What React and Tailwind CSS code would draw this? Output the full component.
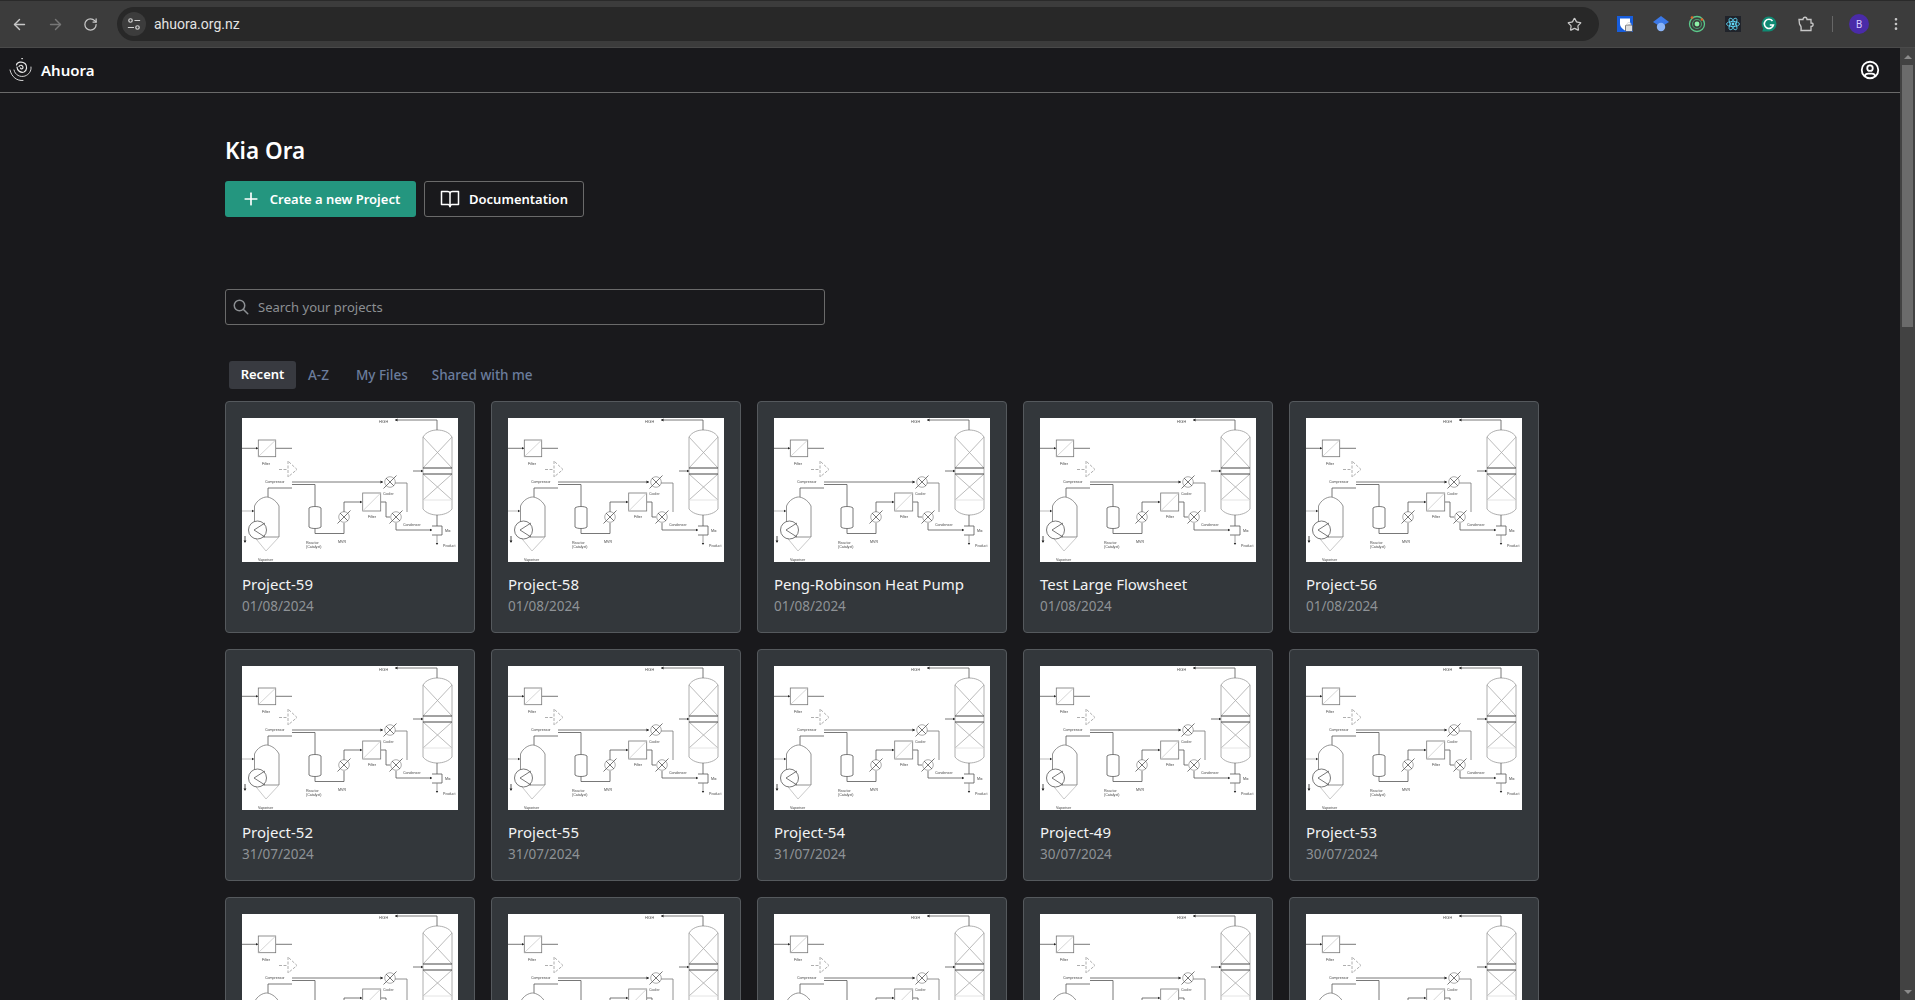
import React from 'react';
import { ArrowLeft, ArrowRight, RotateCw, Star, MoreVertical } from 'lucide-react';
import { TbPlus, TbSearch, TbUserCircle } from 'react-icons/tb';

const projects = [
    { name: 'Project-59', date: '01/08/2024' },
    { name: 'Project-58', date: '01/08/2024' },
    { name: 'Peng-Robinson Heat Pump', date: '01/08/2024' },
    { name: 'Test Large Flowsheet', date: '01/08/2024' },
    { name: 'Project-56', date: '01/08/2024' },
    { name: 'Project-52', date: '31/07/2024' },
    { name: 'Project-55', date: '31/07/2024' },
    { name: 'Project-54', date: '31/07/2024' },
    { name: 'Project-49', date: '30/07/2024' },
    { name: 'Project-53', date: '30/07/2024' },
    { name: 'Project-48', date: '30/07/2024' },
    { name: 'Project-47', date: '30/07/2024' },
    { name: 'Project-46', date: '30/07/2024' },
    { name: 'Project-45', date: '30/07/2024' },
    { name: 'Project-44', date: '30/07/2024' },
];

const labels = [
    { x: 20, y: 46.5, t: 'Filter' },
    { x: 23, y: 64.5, t: 'Compressor' },
    { x: 16, y: 142.5, t: 'Vaporiser' },
    { x: 64, y: 125.5, t: 'Reactor' },
    { x: 64, y: 129.8, t: '(Catalyst)' },
    { x: 96, y: 125, t: 'MVR' },
    { x: 126, y: 100, t: 'Filter' },
    { x: 141, y: 77, t: 'Cooler' },
    { x: 161, y: 107.5, t: 'Condenser' },
    { x: 203, y: 113.5, t: 'Mix' },
    { x: 201, y: 129, t: 'Product' },
    { x: 137, y: 5, t: 'HIGH' },
];

// the same flowsheet drawing is used as the thumbnail of every project
function Flowsheet() {
    return (
        <svg viewBox="0 0 216 144" className="block w-[216px] h-[144px] bg-white blur-[0.2px]">
            <g fill="none" stroke="#555" strokeWidth="0.8">
                <path d="M0 30.3H16M34 30.3H50" />
                <rect x="16.3" y="22" width="17.4" height="16.7" stroke="#777" />
                <path d="M16.3 38.7L33.7 22" stroke="#ccc" />
                <path d="M46 43V59L55 51.5ZM37 51.5H46" stroke="#999" strokeDasharray="3 1.5" />
                <path d="M50 64H141" />
                <path d="M50 66.5H73V88" />
                <path d="M50 70H26V79" />
                <path d="M12.5 88C15 82 21 79 24.5 79C28 79 34 82 37 88V119H12.5Z" stroke="#777" />
                <path d="M12.5 119L24 133L37 119" stroke="#bbb" />
                <circle cx="15.5" cy="112" r="9" fill="#fff" />
                <path d="M23 105L12 112L23 119" />
                <path d="M0 93H12" stroke="#aaa" />
                <path d="M3 118V124" stroke="#222" />
                <path d="M67 90C69 88 77 88 79 90V109C77 111 69 111 67 109Z" />
                <path d="M73 111V115.5H102V105" />
                <circle cx="102" cy="99" r="5.3" stroke="#999" />
                <path d="M95.5 105.5L108.5 92.5M98 95L106 103" />
                <path d="M102 94V84H120" />
                <rect x="120.7" y="75" width="18" height="18" stroke="#777" />
                <path d="M120.7 93L138.7 75" stroke="#ccc" />
                <path d="M139 84H144V99H148" />
                <circle cx="154" cy="99" r="5.3" stroke="#999" />
                <path d="M147.5 105.5L160.5 92.5M150 95L158 103" />
                <path d="M154 105V112H190" />
                <path d="M190 108H200V117H190" />
                <path d="M195 117V126" stroke="#888" />
                <circle cx="148" cy="64" r="5.3" stroke="#999" />
                <path d="M141.5 70.5L154.5 57.5M144 60L152 68" />
                <path d="M153 65H165V94" stroke="#777" />
                <path d="M181 19C184 14 190 12 195 12C201 12 207 14 210 19V91C207 95 201 97 195 97C190 97 184 95 181 91Z" stroke="#999" />
                <path d="M181 19L210 50M210 19L181 50M181 56L210 82M210 56L181 82" stroke="#aaa" />
                <path d="M181 50H210M181 56H210" strokeWidth="1" stroke="#444" />
                <path d="M181 82H210" stroke="#ddd" />
                <path d="M171 53H181" />
                <path d="M195 12V2H153" />
                <path d="M195 97V108" />
            </g>
            <g fill="#222">
                <path d="M16 30.3l-2-1.2v2.4zM12 93l-2-1.2v2.4zM141 64l-2.5-1.4v2.8zM120 84l-2-1.2v2.4zM181 53l-2-1.2v2.4zM153 2l2.5-1.4v2.8zM190 112l-2-1.2v2.4zM3 125l-1.4-2.5h2.8zM195 127l-1.2-2h2.4z" />
            </g>
            {labels.map((l) => (
                <text key={l.t + l.x} x={l.x} y={l.y} fontSize="3.6" fill="#444" fontFamily="'Liberation Sans', sans-serif">{l.t}</text>
            ))}
        </svg>
    );
}

function ProjectCard({ project }) {
    return (
        <div className="w-[250px] h-[232px] shrink-0 rounded-[4px] border border-[#55595d] bg-[#33373b] px-4 pt-4">
            <Flowsheet />
            <div className="mt-[10px] text-[15px] leading-6 text-[#f2f3f4]">{project.name}</div>
            <div className="text-[13.5px] leading-5 text-[#8e9296]">{project.date}</div>
        </div>
    );
}

function AhuoraLogo() {
    return (
        <svg viewBox="0 0 24 24" className="w-6 h-6" fill="none" stroke="#e8e8e8" strokeWidth="0.9" strokeLinecap="round">
            <path d="M1 12C2.5 19 8 23 14 22.5" />
            <path d="M5 12C6 17 11 19.5 16 18C20 16.5 22.5 13 22 9" />
            <path d="M8 9C8 13 12 15 15 14C18 12.5 18.5 8 16 5.5C13 3 8 4 7.5 7" strokeWidth="1.2" />
            <path d="M10 8.5C11 6.5 14 7 14 9.5C14 11 12 11.5 11.5 10" strokeWidth="1.2" />
            <circle cx="13" cy="0.7" r="0.3" />
        </svg>
    );
}

function BookIcon() {
    return (
        <svg viewBox="0 0 20 18" className="w-5 h-[18px]" fill="none" stroke="currentColor" strokeWidth="1.5" strokeLinejoin="round">
            <path d="M1.5 1.5H7.5C9 1.5 10 2.2 10 3.5C10 2.2 11 1.5 12.5 1.5H18.5V14.5H12C11 14.5 10 15 10 16.8C10 15 9 14.5 8 14.5H1.5Z" />
            <path d="M10 3.5V16.8" />
        </svg>
    );
}

function SiteSettingsIcon() {
    return (
        <svg viewBox="0 0 16 16" className="w-[14px] h-[14px]" fill="none" stroke="#d0d0d0" strokeWidth="1.4">
            <circle cx="4" cy="4" r="2" />
            <path d="M8.5 4H15M1 12H8" />
            <circle cx="12" cy="12" r="2" />
        </svg>
    );
}

function ExtensionIcons() {
    return (
        <div className="flex items-center shrink-0">
            {/* password manager */}
            <svg viewBox="0 0 16 16" className="w-4 h-4 ml-[18px]">
                <rect width="16" height="16" fill="#175ddc" />
                <path d="M3 2.5H13V8C13 11 10.5 13 8 14.5C5.5 13 3 11 3 8Z" fill="#fff" />
                <rect x="8.5" y="9" width="7" height="6.5" rx="1" fill="#ddd" stroke="#333" strokeWidth="0.6" />
                <path d="M10.2 9V7.8C10.2 6 13.8 6 13.8 7.8V9" fill="none" stroke="#ddd" />
            </svg>
            {/* graduation cap */}
            <svg viewBox="0 0 16 16" className="w-4 h-4 ml-[20px]">
                <path d="M8 0L16 6L8 11L0 6Z" fill="#3b78e7" />
                <circle cx="8" cy="11" r="4.2" fill="#8ab4f8" />
            </svg>
            {/* radar */}
            <svg viewBox="0 0 18 18" className="w-[18px] h-[18px] ml-[19px]" fill="none">
                <circle cx="9" cy="9" r="7.5" stroke="#5bc88a" strokeWidth="1.3" />
                <circle cx="9" cy="9" r="4.5" stroke="#4a9d6e" strokeWidth="1.1" />
                <circle cx="9" cy="9" r="2.4" fill="#8ef0a8" />
                <circle cx="4" cy="2.5" r="1.3" fill="#e0632c" />
                <circle cx="14" cy="4.5" r="1.3" fill="#e0632c" />
            </svg>
            {/* react devtools */}
            <svg viewBox="0 0 16 16" className="w-4 h-4 ml-[19px]" fill="none" stroke="#61dafb" strokeWidth="0.8">
                <rect width="16" height="16" fill="#20232a" stroke="none" />
                <ellipse cx="8" cy="8" rx="6.5" ry="2.6" />
                <ellipse cx="8" cy="8" rx="6.5" ry="2.6" transform="rotate(60 8 8)" />
                <ellipse cx="8" cy="8" rx="6.5" ry="2.6" transform="rotate(120 8 8)" />
                <circle cx="8" cy="8" r="1.4" fill="#61dafb" stroke="none" />
            </svg>
            {/* grammarly */}
            <svg viewBox="0 0 16 16" className="w-4 h-4 ml-[20px]" fill="none">
                <path d="M8 0.5A7.5 7.5 0 1 1 8 15.5H1.2L2.2 12.5A7.5 7.5 0 0 1 8 0.5Z" fill="#0f8a73" />
                <path d="M11.5 5A4.6 4.6 0 1 0 12.4 9H8.8" stroke="#fff" strokeWidth="1.6" />
            </svg>
            {/* extensions puzzle */}
            <svg viewBox="0 0 16 16" className="w-4 h-4 ml-[21px]" fill="none" stroke="#c7c7c7" strokeWidth="1.3">
                <path d="M1 3.5H5C5 0.5 9 0.5 9 3.5H13V7C15.8 7 15.8 10.5 13 10.5V14.5H3C3.5 12 3 9.5 1.5 8Z" />
            </svg>
            <div className="w-px h-4 bg-[#666] ml-[18px]" />
            <div className="w-5 h-5 rounded-full bg-[#4a2ba8] ml-[16px] flex items-center justify-center text-[10px] text-[#d8ccff]">B</div>
        </div>
    );
}

function BrowserBar() {
    return (
        <div className="h-[48px] shrink-0 bg-[#3c3c3c] border-t border-t-[#2a2a2a] border-b border-b-[#4a4a4a] flex items-center font-['Roboto',sans-serif]">
            <div className="flex items-center w-[117px] shrink-0 pl-[11px] gap-[19px]">
                <ArrowLeft size={17} color="#c7c7c7" />
                <ArrowRight size={17} color="#777" />
                <RotateCw size={15} color="#c7c7c7" />
            </div>
            <div className="w-[1482px] shrink-0 h-[34px] rounded-full bg-[#282828] flex items-center pl-[5px] pr-[17px]">
                <div className="w-6 h-6 rounded-full bg-[#3c3c3c] flex items-center justify-center">
                    <SiteSettingsIcon />
                </div>
                <span className="ml-[8px] text-[14px] text-[#e3e3e3]">ahuora.org.nz</span>
                <Star size={15} color="#c7c7c7" className="ml-auto" />
            </div>
            <ExtensionIcons />
            <MoreVertical size={16} color="#c7c7c7" className="ml-[19px] shrink-0" />
        </div>
    );
}

function Scrollbar() {
    return (
        <div className="w-[15px] shrink-0 bg-[#424242] flex flex-col items-stretch">
            <div className="h-[17px] flex items-center justify-center">
                <div className="w-0 h-0 border-x-[4px] border-x-transparent border-b-[4px] border-b-[#8a8a8a]" />
            </div>
            <div className="h-[262px] mx-[2px] bg-[#6b6b6b]" />
            <div className="mt-auto h-[17px] flex items-center justify-center">
                <div className="w-0 h-0 border-x-[4px] border-x-transparent border-t-[4px] border-t-[#8a8a8a]" />
            </div>
        </div>
    );
}

export default function App() {
    return (
        <div className="h-screen overflow-hidden flex flex-col bg-[#19191c] font-['Noto_Sans',sans-serif] text-white">
            <BrowserBar />
            <div className="flex-1 min-h-0 flex">
                <div className="flex-1 min-w-0 overflow-hidden">
                    <header className="h-[45px] border-b border-[#6a6a6a] flex items-center pl-[9px] pr-[19px]">
                        <AhuoraLogo />
                        <span className="ml-[8px] text-[15px] font-semibold">Ahuora</span>
                        <TbUserCircle size={22} className="ml-auto" />
                    </header>
                    <main className="pl-[225px] pt-[42px]">
                        <h1 className="text-[22.5px] leading-8 font-semibold">Kia Ora</h1>
                        <div className="mt-[14px] flex gap-2">
                            <button className="w-[191px] h-9 rounded-[3px] bg-[#24967f] flex items-center justify-center gap-[9px] text-[13px] font-semibold">
                                <TbPlus size={20} />
                                <span className="pt-px">Create a new Project</span>
                            </button>
                            <button className="w-[160px] h-9 rounded-[3px] border border-[#6a6a6a] flex items-center justify-center gap-[9px] text-[13px] font-semibold">
                                <BookIcon />
                                <span className="pt-px">Documentation</span>
                            </button>
                        </div>
                        <div className="mt-[72px] w-[600px] h-9 rounded-[3px] border border-[#6a6a6a] flex items-center px-[6px] text-[#8c8f93]">
                            <TbSearch size={18} />
                            <span className="ml-[8px] text-[13px] pt-[2px]">Search your projects</span>
                        </div>
                        <nav className="mt-9 ml-[4px] flex h-7 items-center text-[13.5px] font-medium text-[#6b7d9c]">
                            <span className="h-7 w-[67px] flex items-center justify-center rounded-[3px] bg-[#383a40] text-[13px] text-white font-semibold">Recent</span>
                            <span className="pl-3 pr-[15px]">A-Z</span>
                            <span className="px-3">My Files</span>
                            <span className="px-3">Shared with me</span>
                        </nav>
                        <div className="mt-3 grid grid-cols-[repeat(5,250px)] gap-x-4 gap-y-4">
                            {projects.map((project, index) => (
                                <ProjectCard key={index} project={project} />
                            ))}
                        </div>
                    </main>
                </div>
                <Scrollbar />
            </div>
        </div>
    );
}
